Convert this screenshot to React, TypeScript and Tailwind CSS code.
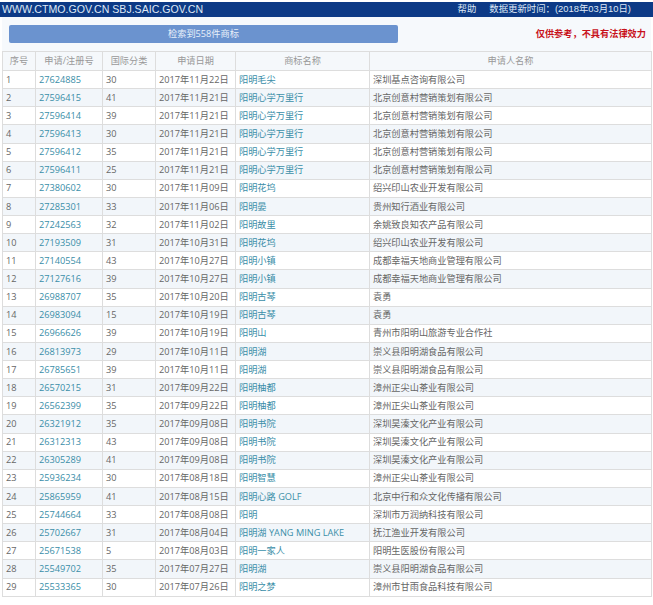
const rows: [string, string, string, string, string][] = [
  ["27624885", "30", "2017年11月22日", "阳明毛尖", "深圳基点咨询有限公司"],
  ["27596415", "41", "2017年11月21日", "阳明心学万里行", "北京创意村营销策划有限公司"],
  ["27596414", "39", "2017年11月21日", "阳明心学万里行", "北京创意村营销策划有限公司"],
  ["27596413", "30", "2017年11月21日", "阳明心学万里行", "北京创意村营销策划有限公司"],
  ["27596412", "35", "2017年11月21日", "阳明心学万里行", "北京创意村营销策划有限公司"],
  ["27596411", "25", "2017年11月21日", "阳明心学万里行", "北京创意村营销策划有限公司"],
  ["27380602", "30", "2017年11月09日", "阳明花坞", "绍兴印山农业开发有限公司"],
  ["27285301", "33", "2017年11月06日", "阳明晏", "贵州知行酒业有限公司"],
  ["27242563", "32", "2017年11月02日", "阳明故里", "余姚致良知农产品有限公司"],
  ["27193509", "31", "2017年10月31日", "阳明花坞", "绍兴印山农业开发有限公司"],
  ["27140554", "43", "2017年10月27日", "阳明小镇", "成都幸福天地商业管理有限公司"],
  ["27127616", "39", "2017年10月27日", "阳明小镇", "成都幸福天地商业管理有限公司"],
  ["26988707", "35", "2017年10月20日", "阳明古琴", "袁勇"],
  ["26983094", "15", "2017年10月19日", "阳明古琴", "袁勇"],
  ["26966626", "39", "2017年10月19日", "阳明山", "青州市阳明山旅游专业合作社"],
  ["26813973", "29", "2017年10月11日", "阳明湖", "崇义县阳明湖食品有限公司"],
  ["26785651", "39", "2017年10月11日", "阳明湖", "崇义县阳明湖食品有限公司"],
  ["26570215", "31", "2017年09月22日", "阳明柚都", "漳州正尖山茶业有限公司"],
  ["26562399", "35", "2017年09月22日", "阳明柚都", "漳州正尖山茶业有限公司"],
  ["26321912", "35", "2017年09月08日", "阳明书院", "深圳昊溱文化产业有限公司"],
  ["26312313", "43", "2017年09月08日", "阳明书院", "深圳昊溱文化产业有限公司"],
  ["26305289", "41", "2017年09月08日", "阳明书院", "深圳昊溱文化产业有限公司"],
  ["25936234", "30", "2017年08月18日", "阳明智慧", "漳州正尖山茶业有限公司"],
  ["25865959", "41", "2017年08月15日", "阳明心路 GOLF", "北京中行和众文化传播有限公司"],
  ["25744664", "33", "2017年08月08日", "阳明", "深圳市万润纳科技有限公司"],
  ["25702667", "31", "2017年08月04日", "阳明湖 YANG MING LAKE", "抚江渔业开发有限公司"],
  ["25671538", "5", "2017年08月03日", "阳明一家人", "阳明生医股份有限公司"],
  ["25549702", "35", "2017年07月27日", "阳明湖", "崇义县阳明湖食品有限公司"],
  ["25533365", "30", "2017年07月26日", "阳明之梦", "漳州市甘雨食品科技有限公司"],
];
const font = { fontFamily: '"Open Sans","Noto Sans CJK SC",sans-serif' };
const barFont = { fontFamily: '"Liberation Sans","Noto Sans CJK SC",sans-serif' };
const head = ["序号", "申请/注册号", "国际分类", "申请日期", "商标名称", "申请人名称"];
const widths = ["w-[33px]", "w-[67px]", "w-[53px]", "w-[80px]", "w-[134px]", "w-[282px]"];
export default function App() {
  return (
    <div className="w-[653px] h-[605px] overflow-hidden bg-white pt-[2px] text-[9.2px] text-[#666]" style={font}>
      <div className="h-[15px] bg-[#0d3a86] flex items-center justify-between pl-[2px] pr-[22px] text-[#dfe8f5]" style={barFont}>
        <span className="text-[10.6px]">WWW.CTMO.GOV.CN SBJ.SAIC.GOV.CN</span>
        <span className="flex gap-[13px] text-[9.4px]"><span>帮助</span><span>数据更新时间：(2018年03月10日)</span></span>
      </div>
      <div className="h-[34px] mx-[2px] bg-[#f6f9fc] flex items-center justify-between pl-[7px] pr-[5px]">
        <div className="w-[389px] h-[18px] rounded-[2px] bg-[#6b93cf] text-[#e8f0fa] flex items-center justify-center">检索到558件商标</div>
        <span className="text-[#c8111a] font-bold">仅供参考，不具有法律效力</span>
      </div>
      <table className="ml-[2px] w-[649px] table-fixed border-collapse border-b border-b-[#bbb]">
        <thead>
          <tr className="h-[19px] bg-[#f5f8fb] border-y border-[#ddd] text-[#999]">
            {head.map((h, i) => (
              <th key={h} className={`${widths[i]} font-normal border-x border-[#ddd] text-center`}>{h}</th>
            ))}
          </tr>
        </thead>
        <tbody>
          {rows.map((r, i) => (
            <tr key={r[0]} className={`h-[18.14px] border-b border-[#ddd] ${i % 2 ? "bg-[#f2f6fa]" : "bg-white"}`}>
              <td className="border-x border-[#ddd] pl-[3px]">{i + 1}</td>
              <td className="border-x border-[#ddd] pl-[3px] text-[#3a8ea8]">{r[0]}</td>
              <td className="border-x border-[#ddd] pl-[3px]">{r[1]}</td>
              <td className="border-x border-[#ddd] pl-[3px]">{r[2]}</td>
              <td className="border-x border-[#ddd] pl-[3px] text-[#3a8ea8]">{r[3]}</td>
              <td className="border-x border-[#ddd] pl-[3px]">{r[4]}</td>
            </tr>
          ))}
        </tbody>
      </table>
    </div>
  );
}
